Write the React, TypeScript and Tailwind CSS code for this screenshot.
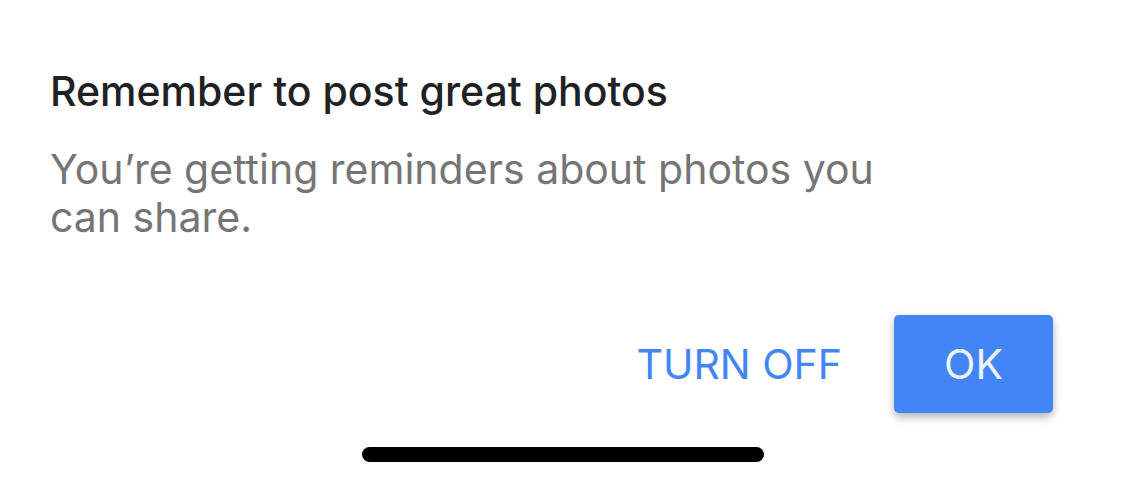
const App = () => {
  return (
    <div
      className="w-[1125px] h-[486px] bg-white flex flex-col"
      style={{ fontFamily: "Inter, Roboto, 'Noto Sans', sans-serif" }}>
      <div className="pl-[50px] pr-[72px] pt-[67px] flex flex-col">
        <p className="text-[41px] leading-[48px] font-medium text-[#202124]">
          Remember to post great photos
        </p>
        <p className="mt-[30px] max-w-[880px] text-[41px] leading-[48px] text-[#757575]">
          You’re getting reminders about photos you can share.
        </p>
        <div className="mt-[74px] flex flex-row items-center justify-end">
          <button className="text-[41px] leading-none text-[#4285f4] cursor-pointer">
            TURN OFF
          </button>
          <button className="ml-[52px] w-[159px] h-[98px] rounded-[5px] bg-[#4285f4] text-[41px] leading-none text-[#eef3fd] shadow-[0_4px_8px_rgba(0,0,0,0.3)] cursor-pointer">
            OK
          </button>
        </div>
      </div>
      <div className="mt-[34px] flex justify-center">
        <div className="w-[402px] h-[15px] rounded-full bg-black" />
      </div>
    </div>
  );
};

export default App;
